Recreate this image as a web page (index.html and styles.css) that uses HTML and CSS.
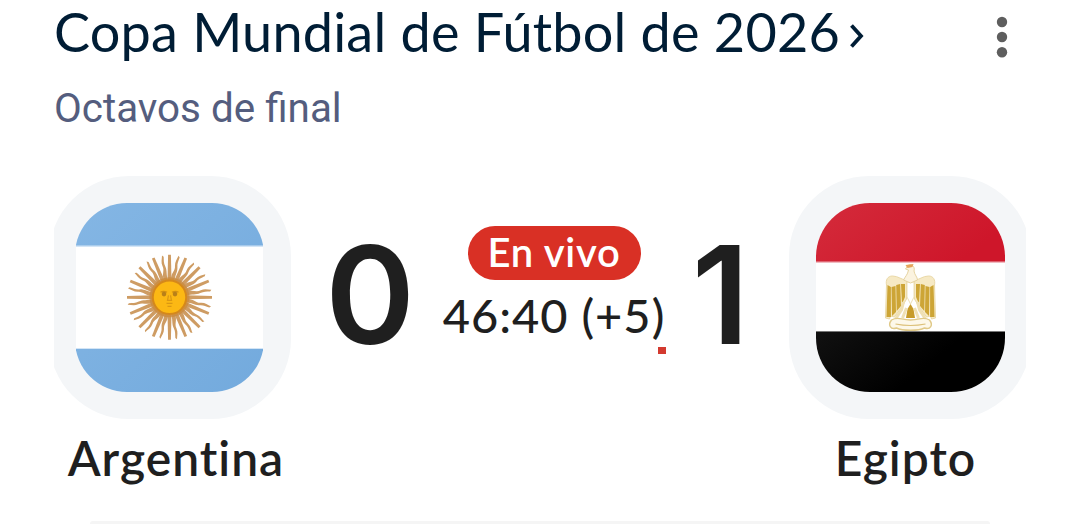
FILE: index.html
```html
<!DOCTYPE html>
<html lang="es">
<head>
  <meta charset="UTF-8" />
  <meta name="viewport" content="width=device-width, initial-scale=1.0"/>
  <title>Copa Mundial de Fútbol de 2026</title>
  <link rel="stylesheet" href="styles.css">
</head>
<body>
  <div class="header">
    <h1><span>Copa Mundial de Fútbol de 2026</span>
      <svg class="chevron" width="14" height="24" viewBox="0 0 14 24"><path d="M1.5 1.5 L11 12 L1.5 22.5" fill="none" stroke="currentColor" stroke-width="3.8"/></svg>
    </h1>
    <svg class="menu" width="12" height="42" viewBox="0 0 12 42">
      <circle cx="6" cy="6" r="5.2"/><circle cx="6" cy="21" r="5.2"/><circle cx="6" cy="36.3" r="5.2"/>
    </svg>
  </div>
  <p class="stage">Octavos de final</p>

  <div class="match">
    <div class="team home">
      <div class="badge">
        <svg width="187" height="189" viewBox="0 0 187 189">
          <defs>
            <linearGradient id="celeste" x1="0" y1="0" x2="1" y2="1">
              <stop offset="0" stop-color="#84b6e4"/><stop offset="1" stop-color="#73aadd"/>
            </linearGradient>
            <clipPath id="clip-ar"><rect x="-1" width="189" height="189" rx="52"/></clipPath>
            <!-- rayos del sol: recto + ondulado, duplicados hasta 32 -->
            <g id="rays2">
              <path d="M-2 -17 L-1.4 -42.5 H1.4 L2 -17Z"/>
              <path transform="rotate(11.25)" d="M-2 -17 C-3.6 -24 0.8 -27 -0.8 -32 C-1.7 -36 0 -39 0.8 -42.5 L2.2 -41 C1.7 -37 0.8 -35 1.9 -31 C3.2 -26 0.8 -23 2 -17Z"/>
            </g>
            <g id="rays4"><use href="#rays2"/><use href="#rays2" transform="rotate(22.5)"/></g>
            <g id="rays8"><use href="#rays4"/><use href="#rays4" transform="rotate(45)"/></g>
            <g id="rays16"><use href="#rays8"/><use href="#rays8" transform="rotate(90)"/></g>
          </defs>
          <g clip-path="url(#clip-ar)">
            <rect width="187" height="189" fill="url(#celeste)"/>
            <rect y="42.5" width="187" height="103.5" fill="#d3e5f6"/>
            <rect y="44" width="187" height="101" fill="#fff"/>
          </g>
          <!-- la franja blanca llega recta hasta el borde -->
          <rect y="44" width="187" height="101" fill="#fff"/>
          <g transform="translate(93.5 94.3)">
            <g fill="#ce9c63"><use href="#rays16"/><use href="#rays16" transform="rotate(180)"/></g>
            <circle r="20" fill="#c98532" opacity=".6"/>
            <circle r="16.7" fill="#fcb814" stroke="#d5881b" stroke-width="2"/>
            <g fill="none" stroke="#b9770f">
              <path d="M-9 -5 Q-6 -7 -2.5 -5 M2.5 -5 Q6 -7 9 -5" stroke-width="1.2" opacity=".6"/>
              <path d="M-1 -2 L-2 3 H2 L1 -2 M-3 6 H3 M-2 9 H2" stroke-width="1.2" opacity=".5"/>
            </g>
            <g fill="#a9731b" opacity=".8"><circle cx="-5.5" cy="-3.2" r="2.3"/><circle cx="5.5" cy="-3.2" r="2.3"/></g>
          </g>
        </svg>
      </div>
      <div class="name">Argentina</div>
    </div>

    <div class="result">
      <div class="score">0</div>
      <div class="status">
        <span class="live">En vivo</span>
        <span class="clock">46:40 (+5)</span>
        <span class="progress"></span>
      </div>
      <div class="score">1</div>
    </div>

    <div class="team away">
      <div class="badge">
        <svg width="189" height="189" viewBox="0 0 189 189">
          <defs>
            <linearGradient id="rojo" x1="0" y1="0" x2="1" y2=".4">
              <stop offset="0" stop-color="#d42b3b"/><stop offset="1" stop-color="#ce162a"/>
            </linearGradient>
            <linearGradient id="negro" x1="0" y1="0" x2="1" y2=".4">
              <stop offset="0" stop-color="#111"/><stop offset=".7" stop-color="#000"/>
            </linearGradient>
            <clipPath id="clip-eg"><rect width="189" height="189" rx="54"/></clipPath>
          </defs>
          <g clip-path="url(#clip-eg)">
            <rect width="189" height="189" fill="#fff"/>
            <rect width="189" height="59" fill="url(#rojo)"/>
            <rect y="58.5" width="189" height="1.3" fill="#edabb2"/>
            <rect y="128" width="189" height="1.5" fill="#777"/>
            <rect y="129" width="189" height="60" fill="url(#negro)"/>
          </g>
          <!-- águila de Saladino -->
          <g transform="translate(94.5 0)">
            <g id="wing">
              <path d="M-4 77 C-9 77 -12 73 -18 73 C-23 73 -25 77 -24 82 L-25 115 L-21 116 L-20 113 L-16 114 L-8 103 L-4 96Z" fill="#f6e9c4" stroke="#ead9a8" stroke-width="1"/>
              <path d="M-23 82 L-19.6 84 V114 H-24Z M-19 84 L-15 83 L-14.5 109 L-18.5 113Z M-14.3 82 L-10.3 81 L-9.5 103 L-13.8 108Z M-9.5 81 L-5.5 81 V94 L-8.5 101Z" fill="#cda536"/>
            </g>
            <use href="#wing" transform="scale(-1 1)"/>
            <path d="M-3.5 79 V94 L0 101 L3.5 94 V79Z" fill="#fff" stroke="#eddfb5" stroke-width="1"/>
            <path d="M-3 63 C0 60 5 63 3.5 68 C4 72 7 74 7 77 L0 80 L-7 77 C-5 73 -3 72 -2 67 L-5 66Z" fill="#fbf3df" stroke="#e6d3a0" stroke-width="1"/>
            <path d="M-5 62 L3 61 L2 64 L-3 65Z" fill="#e5a45b"/>
            <path d="M-4.5 115 L-3 106 L0 101 L3 106 L4.5 115Z" fill="#c79b2a"/>
            <path d="M-7 99 L-9 107 L-15 116 M7 99 L9 107 L15 116 M-4 105 L-8 115 M4 105 L8 115" fill="none" stroke="#efe0b4" stroke-width="3"/>
            <path d="M-19 117 C-12 113 -10 117 0 117 C10 117 12 113 19 117 C23 122 20 127 14 125 C8 128 -8 128 -14 125 C-20 127 -23 122 -19 117Z" fill="#fdf8e9" stroke="#e0c988" stroke-width="1.4"/>
            <path d="M-15 121 Q0 124 15 121" fill="none" stroke="#dcc078" stroke-width="1.2"/>
          </g>
        </svg>
      </div>
      <div class="name">Egipto</div>
    </div>
  </div>

  <div class="next-card"></div>
</body>
</html>
```

FILE: styles.css
```css
* {
  box-sizing: border-box;
}

body {
  font-family: Lato, "Open Sans", sans-serif;
  background: #fff;
  color: #1f1f1f;
  margin: 0;
  padding: 0 53px 0 54px;
  height: 524px;
  overflow: hidden;
}

.header {
  display: flex;
  justify-content: space-between;
  align-items: flex-start;
  height: 84px;
  padding-right: 18px;
}

.header h1 {
  display: flex;
  align-items: flex-start;
  gap: 10px;
  margin: 0;
  font-size: 54px;
  font-weight: 400;
  line-height: 64px;
  letter-spacing: 0.22px;
  white-space: nowrap;
  color: #001d35;
}

.chevron {
  margin-top: 24px;
}

.menu {
  margin-top: 16px;
  fill: #5e5e5e;
}

.stage {
  margin: 0;
  height: 92px;
  font-family: Roboto, sans-serif;
  font-size: 40.4px;
  line-height: 50px;
  color: #545d7e;
}

.match {
  display: flex;
  height: 345px;
  overflow: hidden;
}

.team {
  flex: 0 0 237px;
}

.badge {
  display: flex;
  justify-content: center;
  align-items: center;
  width: 242px;
  height: 243px;
  border-radius: 80px;
  background: #f4f6f8;
}

.home .badge {
  margin-left: -5px;
  padding-right: 1px;
}

.name {
  margin-top: 7px;
  font-size: 48px;
  font-weight: 600;
  line-height: 64px;
  letter-spacing: 1px;
  font-variant-ligatures: none;
  text-align: center;
}

.home .name {
  padding-left: 7px;
}

.away .name {
  padding-right: 9px;
}

.result {
  display: grid;
  grid-template-columns: 158px 210px 130px;
  height: 243px;
}

.score {
  font-family: Inter, sans-serif;
  font-size: 136px;
  font-weight: 600;
  line-height: 238px;
  text-align: center;
}

.score:last-child {
  padding-right: 7px;
}

.status {
  display: flex;
  flex-direction: column;
  align-items: center;
  padding-top: 50px;
  margin: 0 -6px;
}

.live {
  width: 173px;
  height: 54px;
  border-radius: 27px;
  background: #d93025;
  color: #fff;
  font-size: 40px;
  font-weight: 600;
  line-height: 52px;
  letter-spacing: 0.7px;
  text-align: center;
}

.clock {
  height: 67px;
  font-size: 47px;
  font-weight: 500;
  line-height: 70px;
  letter-spacing: 1px;
  white-space: nowrap;
}

.progress {
  align-self: flex-end;
  width: 8px;
  height: 7px;
  margin-right: -1px;
  background: #d33a2f;
}

.next-card {
  height: 3px;
  margin: 0 36px;
  border-radius: 12px 12px 0 0;
  background: #f5f5f5;
}
```
